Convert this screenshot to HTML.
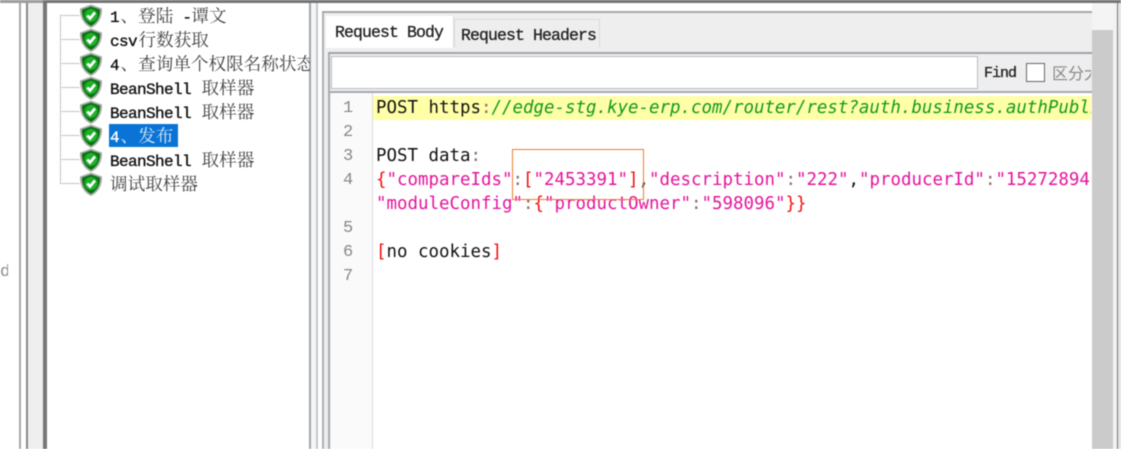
<!DOCTYPE html>
<html lang="zh"><head><meta charset="utf-8"><title>Request Body</title>
<style>
html,body{margin:0;padding:0;background:#fff}
#p{position:relative;width:1121px;height:449px;overflow:hidden;background:#fff;filter:blur(.5px)}
#p div,#p svg{position:absolute}
.t{font:16px/24px "Liberation Mono","Noto Serif CJK SC",monospace;letter-spacing:-.6px;color:#111;white-space:pre;left:110px;height:24px;-webkit-text-stroke:.35px #111}
.t b{font:17.6px/24px "Noto Serif CJK SC","Noto Sans CJK SC",serif;letter-spacing:0;color:#444;font-weight:400;-webkit-text-stroke:0;margin-left:1.500px}
.c{font:17.46px/24px "DejaVu Sans Mono",monospace;white-space:pre;left:376px;color:#111;width:715px;overflow:hidden;height:24px}
.n{font:17px/24px "Liberation Mono",monospace;color:#888;left:343px;width:12px;height:24px}
.g{color:#119a1c;font-style:italic}.k{color:#e5139b}.r{color:#f40f0f}.u{color:#8a6a6a}
.h{font:16.5px/24px "Liberation Mono",monospace;letter-spacing:-.9px;color:#222;white-space:pre;-webkit-text-stroke:.3px #222}
.d{left:60px;width:19px;height:0;border-top:1px dotted #888}
</style></head><body><div id="p">
<div style="left:0;top:0;width:1121px;height:3px;background:#747474"></div>
<div style="left:0;top:0;width:43px;height:3px;background:#9c9c9c"></div>
<div style="left:0;top:264px;width:8px;font:17px/18px 'Liberation Mono',monospace;color:#888;overflow:hidden">d</div>
<div style="left:19px;top:3px;width:2px;height:446px;background:#a5a8ab"></div>
<div style="left:26px;top:3px;width:2px;height:446px;background:#888"></div>
<div style="left:28px;top:3px;width:15px;height:446px;background:#efefef"></div>
<div style="left:43px;top:3px;width:4px;height:446px;background:#777"></div>
<div style="left:309px;top:3px;width:2px;height:446px;background:#a0a5ab"></div>
<div style="left:311px;top:3px;width:5px;height:446px;background:#f6f6f6"></div>
<div style="left:316px;top:3px;width:2px;height:446px;background:#c4c7ca"></div>
<div style="left:322px;top:12px;width:2px;height:437px;background:#adb1b5"></div>
<div style="left:322px;top:11px;width:770px;height:2px;background:#a4a8ac"></div>
<div style="left:324px;top:13px;width:768px;height:436px;background:#eee"></div>

<div style="left:326px;top:16px;width:127px;height:32px;background:#fff;border-right:1px solid #ddd"></div>
<div style="left:454px;top:19px;width:146px;height:28px;background:#eee;border:1px solid #dcdcdc;border-bottom:0;box-sizing:border-box"></div>
<div class="h" style="left:335px;top:21px">Request Body</div>
<div class="h" style="left:461px;top:24px">Request Headers</div>

<div style="left:328px;top:52px;width:764px;height:2px;background:#9fa4a9"></div>
<div style="left:328px;top:54px;width:2px;height:395px;background:#a8acb0"></div>
<div style="left:331px;top:56px;width:647px;height:33px;background:#fff;border:1px solid #b8bcc2;box-sizing:border-box"></div>
<div style="left:984px;top:63px;font:15px/22px 'Liberation Mono',monospace;color:#222;letter-spacing:-1px;-webkit-text-stroke:.3px #222">Find</div>
<div style="left:1026px;top:63px;width:19px;height:19px;border:1.500px solid #666;background:#fff;box-sizing:border-box"></div>
<div style="left:1052px;top:61px;width:39px;overflow:hidden;font:16px/22px 'Noto Sans CJK SC',sans-serif;color:#888;white-space:pre">区分大小写</div>
<div style="left:330px;top:91px;width:762px;height:2px;background:#a5a9ae"></div>

<div style="left:331px;top:93px;width:761px;height:356px;background:#fff"></div>
<div style="left:331px;top:93px;width:41px;height:356px;background:#fafafa"></div>
<div style="left:372px;top:93px;width:1px;height:356px;background:#ddd"></div>
<div style="left:373px;top:96px;width:718px;height:24px;background:#ffffa8"></div>
<div class="n" style="top:97px">1</div><div class="n" style="top:121px">2</div><div class="n" style="top:145px">3</div><div class="n" style="top:169px">4</div><div class="n" style="top:217px">5</div><div class="n" style="top:241px">6</div><div class="n" style="top:265px">7</div>
<div class="c" style="top:96px">POST https<span class="u">:</span><span class="g">//edge-stg.kye-erp.com/router/rest?auth.business.authPublish</span></div>
<div class="c" style="top:144px">POST data<span class="u">:</span></div>
<div class="c" style="top:168px"><span class="r">{</span><span class="k">"compareIds"</span><span class="u">:</span><span class="r">[</span><span class="k">"2453391"</span><span class="r">]</span>,<span class="k">"description"</span><span class="u">:</span><span class="k">"222"</span>,<span class="k">"producerId"</span><span class="u">:</span><span class="k">"15272894</span></div>
<div class="c" style="top:192px"><span class="k">"moduleConfig"</span><span class="u">:</span><span class="r">{</span><span class="k">"productOwner"</span><span class="u">:</span><span class="k">"598096"</span><span class="r">}}</span></div>
<div class="c" style="top:240px"><span class="r">[</span>no cookies<span class="r">]</span></div>
<div style="left:512px;top:149px;width:132px;height:51px;border:1px solid #ed7d31;box-sizing:border-box"></div>

<div style="left:1092px;top:3px;width:21px;height:27px;background:#f4f4f4"></div>
<div style="left:1092px;top:30px;width:21px;height:419px;background:#cbcbcb"></div>
<div style="left:1113px;top:3px;width:4px;height:446px;background:#f2f2f2"></div>
<div style="left:1117px;top:3px;width:1px;height:446px;background:#777"></div>
<div style="left:1118px;top:3px;width:3px;height:446px;background:#e4e4e4"></div>

<div style="left:60px;top:15px;width:0;height:169px;border-left:1px dotted #888"></div>
<div class="d" style="top:15px"></div>
<div class="d" style="top:39px"></div>
<div class="d" style="top:63px"></div>
<div class="d" style="top:87px"></div>
<div class="d" style="top:111px"></div>
<div class="d" style="top:135px"></div>
<div class="d" style="top:159px"></div>
<div class="d" style="top:183px"></div>

<svg width="0" height="0" style="left:0;top:0"><defs><symbol id="s" viewBox="0 0 24 24"><path d="M12 0.500 L23 4.500 C23.500 13 19.500 20.500 12 24 C4.500 20.500 0.500 13 1 4.500Z" fill="#a9aea9"/><path d="M12 2.500 L21 5.500 C21.500 12.500 18 19 12 22 C6 19 2.500 12.500 3 5.500Z" fill="#0b7512"/><circle cx="12" cy="11.500" r="6.500" fill="#1fb02c"/><path d="M8.300 11.500 L11 14.500 L16 8.500" fill="none" stroke="#fff" stroke-width="2.800"/></symbol></defs></svg>
<svg style="left:79px;top:4px" width="24" height="24"><use href="#s"/></svg>
<svg style="left:79px;top:28px" width="24" height="24"><use href="#s"/></svg>
<svg style="left:79px;top:52px" width="24" height="24"><use href="#s"/></svg>
<svg style="left:79px;top:76px" width="24" height="24"><use href="#s"/></svg>
<svg style="left:79px;top:100px" width="24" height="24"><use href="#s"/></svg>
<svg style="left:79px;top:124px" width="24" height="24"><use href="#s"/></svg>
<svg style="left:79px;top:148px" width="24" height="24"><use href="#s"/></svg>
<svg style="left:79px;top:172px" width="24" height="24"><use href="#s"/></svg>

<div style="left:109px;top:124px;width:69px;height:23px;background:#0a74d6"></div>
<div class="t" style="top:4px">1<b>、登陆</b> -<b style="margin-left:0">谭文</b></div>
<div class="t" style="top:28px">csv<b>行数获取</b></div>
<div class="t" style="top:52px;width:200px;overflow:hidden">4<b>、查询单个权限名称状态</b></div>
<div class="t" style="top:76px">BeanShell <b>取样器</b></div>
<div class="t" style="top:100px">BeanShell <b>取样器</b></div>
<div class="t" style="top:124px;color:#fff;-webkit-text-stroke:.35px #fff">4<b style="color:#dbeaf8">、发布</b></div>
<div class="t" style="top:148px">BeanShell <b>取样器</b></div>
<div class="t" style="top:172px"><b style="margin-left:0">调试取样器</b></div>
</div></body></html>
